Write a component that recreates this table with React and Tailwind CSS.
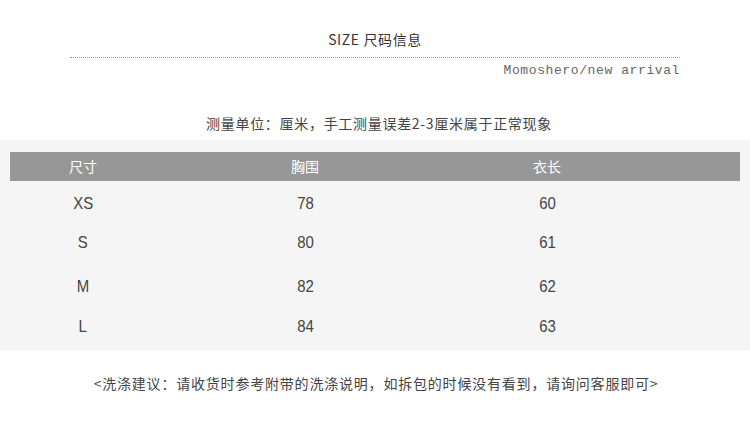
import React from "react";

const rows = [
  { size: "XS", chest: "78", length: "60", h: "h-[46px]" },
  { size: "S", chest: "80", length: "61", h: "h-[32px]" },
  { size: "M", chest: "82", length: "62", h: "h-[56px]" },
  { size: "L", chest: "84", length: "63", h: "h-[24px]" },
];

export default function App() {
  return (
    <div className="w-[750px] h-[435px] bg-white text-[#333] font-['Noto_Sans_CJK_SC','Liberation_Sans',sans-serif] overflow-hidden">
      {/* Title */}
      <div className="pt-[29px] text-center text-[14px] leading-[20px] text-[#333] tracking-[0.6px]">SIZE 尺码信息</div>
      <div className="mx-[70px] mt-[8px] border-t border-dotted border-[#9a9a9a]" />
      <div className="mx-[70px] mt-[5px] text-right font-['Liberation_Mono',monospace] text-[13px] leading-[16px] text-[#666] tracking-[0.6px] mr-[70px]">
        Momoshero/new arrival
      </div>

      <div className="mt-[34px] text-center text-[14px] leading-[20px] text-[#444] tracking-[0.7px] pl-[8px]">
        测量单位：厘米，手工测量误差2-3厘米属于正常现象
      </div>

      {/* Table */}
      <div className="mt-[7px] bg-[#f5f5f5] pt-[12px] pb-[12px] px-[10px]">
        <div className="flex h-[29px] items-center bg-[#979797] text-white text-[14px]">
          <div className="w-[146px] text-center">尺寸</div>
          <div className="w-[298px] text-center">胸围</div>
          <div className="w-[186px] text-center">衣长</div>
        </div>
        {rows.map((r) => (
          <div key={r.size} className={`flex items-center ${r.h} text-[17px] text-[#444] font-['Liberation_Sans',sans-serif]`}>
            <div className="w-[146px] text-center"><span className="inline-block scale-x-[0.88]">{r.size}</span></div>
            <div className="w-[298px] text-center"><span className="inline-block scale-x-[0.88]">{r.chest}</span></div>
            <div className="w-[186px] text-center"><span className="inline-block scale-x-[0.88]">{r.length}</span></div>
          </div>
        ))}
      </div>

      <div className="mt-[22px] text-center text-[14px] leading-[20px] text-[#444] tracking-[0.8px] pl-[2px]">
        &lt;洗涤建议：请收货时参考附带的洗涤说明，如拆包的时候没有看到，请询问客服即可&gt;
      </div>
    </div>
  );
}
